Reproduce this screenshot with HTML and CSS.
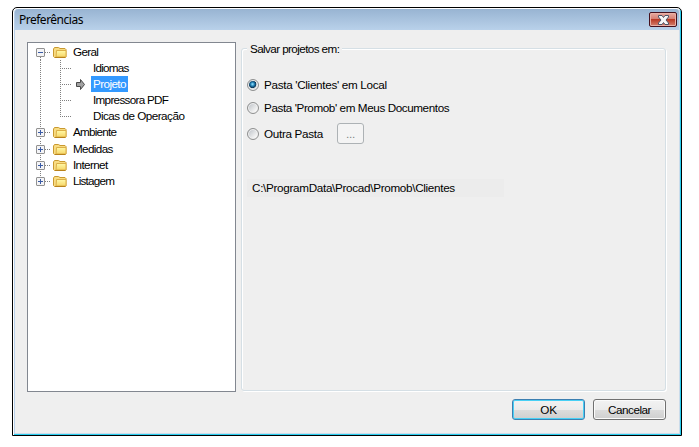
FILE: index.html
```html
<!DOCTYPE html>
<html lang="pt-BR">
<head>
    <meta charset="UTF-8">
    <title>Preferências</title>
    <link rel="stylesheet" href="styles.css">
</head>
<body>
    <!-- Ícones reutilizados na árvore -->
    <svg width="0" height="0" class="defs">
        <defs>
            <linearGradient id="grad-pasta" x1="0" y1="0" x2="0" y2="1">
                <stop offset="0" stop-color="#fff9a8"/>
                <stop offset="1" stop-color="#f6d668"/>
            </linearGradient>
            <symbol id="pasta" viewBox="0 0 14 11">
                <path d="M.5 9.5V2L1.5.5h4L7 1.5h5l1 1v7l-1 1H1.5z" fill="#f8dc83" stroke="#c9992f"/>
                <path d="M3.500 3.500h9.500v6.500h-10z" fill="url(#grad-pasta)" stroke="#dcb048"/>
                <path d="M2 10.500h10.500" stroke="#b8821c"/>
            </symbol>
            <symbol id="mais" viewBox="0 0 9 9">
                <rect x=".5" y=".5" width="8" height="8" rx=".5" fill="#f4f4f6" stroke="#919191"/>
                <path d="M2 4.500h5M4.500 2v5" stroke="#3a5ba5"/>
            </symbol>
            <symbol id="menos" viewBox="0 0 9 9">
                <rect x=".5" y=".5" width="8" height="8" rx=".5" fill="#f4f4f6" stroke="#919191"/>
                <path d="M2 4.500h5" stroke="#3a5ba5"/>
            </symbol>
        </defs>
    </svg>

    <div class="janela">
        <div class="titulo">
            <span class="titulo-texto">Preferências</span>
            <button class="btn-fechar" aria-label="Fechar">
                <svg width="13" height="10" viewBox="0 0 13 10">
                    <path d="M1.500.5h3.500l1.500 2 1.500-2h3.500v1.500L9 5l2.500 3v1.500H8l-1.500-2-1.500 2H1.500V8L4 5 1.500 2z" fill="#f6f6f6" stroke="#4c5568"/>
                </svg>
            </button>
        </div>

        <div class="conteudo">
            <div class="paineis">
                <ul class="arvore">
                    <li class="no">
                        <svg class="caixa"><use href="#menos"/></svg><i class="traco"></i><svg class="pasta"><use href="#pasta"/></svg>
                        <span class="t-geral">Geral</span>
                    </li>
                    <li class="filho"><i class="traco-filho"></i><span class="t-idiomas">Idiomas</span></li>
                    <li class="filho">
                        <i class="traco-filho"></i>
                        <svg class="seta" viewBox="0 0 9 11"><path d="M.5 3.500h4v-3l4 5-4 5v-3h-4z" fill="#a2a2a2" stroke="#4a4a4a"/></svg>
                        <span class="selecionado">Projeto</span>
                    </li>
                    <li class="filho"><i class="traco-filho"></i><span class="t-impressora">Impressora PDF</span></li>
                    <li class="filho ultimo"><i class="traco-filho"></i><span class="t-dicas">Dicas de Operação</span></li>
                    <li class="no ambiente">
                        <svg class="caixa"><use href="#mais"/></svg><i class="traco"></i><svg class="pasta"><use href="#pasta"/></svg>
                        <span class="t-ambiente">Ambiente</span>
                    </li>
                    <li class="no">
                        <svg class="caixa"><use href="#mais"/></svg><i class="traco"></i><svg class="pasta"><use href="#pasta"/></svg>
                        <span class="t-medidas">Medidas</span>
                    </li>
                    <li class="no">
                        <svg class="caixa"><use href="#mais"/></svg><i class="traco"></i><svg class="pasta"><use href="#pasta"/></svg>
                        <span class="t-internet">Internet</span>
                    </li>
                    <li class="no">
                        <svg class="caixa"><use href="#mais"/></svg><i class="traco"></i><svg class="pasta"><use href="#pasta"/></svg>
                        <span class="t-listagem">Listagem</span>
                    </li>
                </ul>

                <div class="grupo">
                    <div class="legenda"><span>Salvar projetos em:</span></div>
                    <label class="opcao"><i class="radio marcado"></i><span>Pasta 'Clientes' em Local</span></label>
                    <label class="opcao"><i class="radio"></i><span class="t-documentos">Pasta 'Promob' em Meus Documentos</span></label>
                    <label class="opcao outra"><i class="radio"></i><span class="t-outra">Outra Pasta</span><button class="btn-pasta" disabled>...</button></label>
                    <div class="caminho">C:\ProgramData\Procad\Promob\Clientes</div>
                </div>
            </div>

            <div class="botoes">
                <button class="btn btn-ok">OK</button>
                <button class="btn btn-cancelar">Cancelar</button>
            </div>
        </div>
    </div>
</body>
</html>
```
FILE: styles.css
```css
* {
    box-sizing: border-box;
}
body {
    margin: 0;
    padding: 7px 0 0 12px;
    background: #fff;
    font: 11.7px/16px "Liberation Sans", Arial, sans-serif;
    letter-spacing: -0.31px;
    color: #000;
}
.defs {
    position: absolute;
}
button {
    font: inherit;
    letter-spacing: inherit;
    color: inherit;
    padding: 0;
}

/* Janela */
.janela {
    width: 670px;
    height: 429px;
    border: 1px solid #000;
    border-radius: 5px 5px 0 0;
    background: #efefef;
    box-shadow: inset 1px 1px #fff, inset -1px -1px #27cdee, inset 2px 0 #b9d1ea, inset -2px -2px #cbdbea;
    padding: 1px 2px 2px;
    display: flex;
    flex-direction: column;
}
.titulo {
    height: 21px;
    flex: none;
    border-radius: 3px 3px 0 0;
    background: linear-gradient(#98b4d2, #b9d1ea);
    display: flex;
    justify-content: space-between;
    padding: 3px 2px 0 4px;
}
.titulo-texto {
    font: 12px/16px "Noto Sans", sans-serif;
    letter-spacing: -0.5px;
}
.btn-fechar {
    width: 28px;
    height: 15px;
    border: 1px solid #45101d;
    border-radius: 2px;
    background: linear-gradient(#e8aaa0, #d78074 45%, #b93a25 50%, #d5806f);
    box-shadow: inset 0 0 0 1px #e9b0a6;
    display: flex;
    align-items: center;
    justify-content: center;
}

/* Painéis */
.conteudo {
    padding: 12px 13px 0 12px;
}
.paineis {
    display: flex;
    gap: 5px;
}
.arvore {
    list-style: none;
    margin: 0;
    padding: 1px 0 0 8px;
    width: 209px;
    height: 350px;
    border: 1px solid #828790;
    background: #fff;
}
.no, .filho {
    height: 16px;
    display: flex;
    align-items: center;
    background: repeating-linear-gradient(#808080 0 1px, transparent 1px 2px) 4px 0 / 1px 16px no-repeat;
}
.no:first-child {
    background-position: 4px 13px;
}
.no:last-child {
    background-size: 1px 4px;
}
.ambiente {
    height: 17px;
    padding-bottom: 1px;
}
.caixa {
    width: 9px;
    height: 9px;
}
.traco {
    width: 6px;
    height: 1px;
    margin-right: 2px;
    background: repeating-linear-gradient(90deg, #808080 0 1px, transparent 1px 2px);
}
.pasta {
    width: 14px;
    height: 11px;
    margin-right: 6px;
}
.filho {
    background:
        repeating-linear-gradient(#808080 0 1px, transparent 1px 2px) 4px 0 / 1px 16px no-repeat,
        repeating-linear-gradient(#808080 0 1px, transparent 1px 2px) 24px 0 / 1px 16px no-repeat;
}
.ultimo {
    background-size: 1px 16px, 1px 9px;
}
.traco-filho {
    width: 11px;
    height: 1px;
    margin: 0 22px 0 24px;
    background: repeating-linear-gradient(90deg, #808080 0 1px, transparent 1px 2px);
}
.seta {
    width: 9px;
    height: 11px;
    margin: 0 6px 0 -17px;
}
.selecionado {
    height: 16px;
    width: 37px;
    padding-left: 2px;
    background: #3399ff;
    color: #fff;
    letter-spacing: -0.6px;
}

/* Ajuste de largura dos textos da árvore */
.t-geral, .t-impressora {
    letter-spacing: -0.7px;
}
.t-idiomas, .t-ambiente, .t-listagem {
    letter-spacing: -0.78px;
}
.t-medidas, .t-internet {
    letter-spacing: -0.64px;
}
.t-dicas {
    letter-spacing: -0.51px;
}

/* Grupo de opções */
.grupo {
    width: 425px;
    height: 343px;
    margin-top: 6px;
    border: 1px solid #d5dfe5;
    border-radius: 3px;
    box-shadow: inset 1px 1px #fff, 1px 1px #fff;
    padding-left: 5px;
}
.legenda {
    height: 16px;
    margin-top: -8px;
    letter-spacing: -0.6px;
}
.legenda span {
    display: inline-block;
    background: #efefef;
    padding: 0 3px;
}
.opcao {
    display: flex;
    align-items: center;
    height: 23px;
}
.legenda + .opcao {
    margin-top: 16px;
}
.t-documentos {
    letter-spacing: -0.41px;
}
.outra {
    height: 29px;
}
.t-outra {
    width: 59px;
    white-space: nowrap;
}
.radio {
    width: 12px;
    height: 12px;
    margin-right: 5px;
    border: 1px solid #8e8f8f;
    border-radius: 50%;
    background: linear-gradient(135deg, #b9bec4, #f4f4f4 75%);
    box-shadow: inset 0 0 0 1px #f2f2f2;
}
.marcado {
    background: radial-gradient(circle at 45% 42%, #7fd4f5 0 5%, #1f7bb0 25%, #0b3554 44%, #d5dbe0 52%);
}
.btn-pasta {
    width: 27px;
    height: 21px;
    margin-left: 14px;
    border: 1px solid #adb2b5;
    border-radius: 3px;
    background: #f4f4f4;
    color: #838383;
}
.caminho {
    width: 257px;
    height: 18px;
    margin-top: 31px;
    padding-left: 5px;
    line-height: 17px;
    background: #ececec;
}

/* Botões */
.botoes {
    display: flex;
    justify-content: flex-end;
    gap: 8px;
    margin-top: 7px;
}
.btn {
    width: 73px;
    height: 21px;
    border: 1px solid #707070;
    border-radius: 3px;
    background: linear-gradient(#f2f2f2, #ebebeb 50%, #dddddd 50%, #cfcfcf);
    box-shadow: inset 0 0 0 1px #fbfbfb;
}
.btn-ok {
    border-color: #3c7fb1;
    box-shadow: inset 0 0 0 1px #48d0f5;
}
.btn-cancelar {
    letter-spacing: -0.5px;
}
```
